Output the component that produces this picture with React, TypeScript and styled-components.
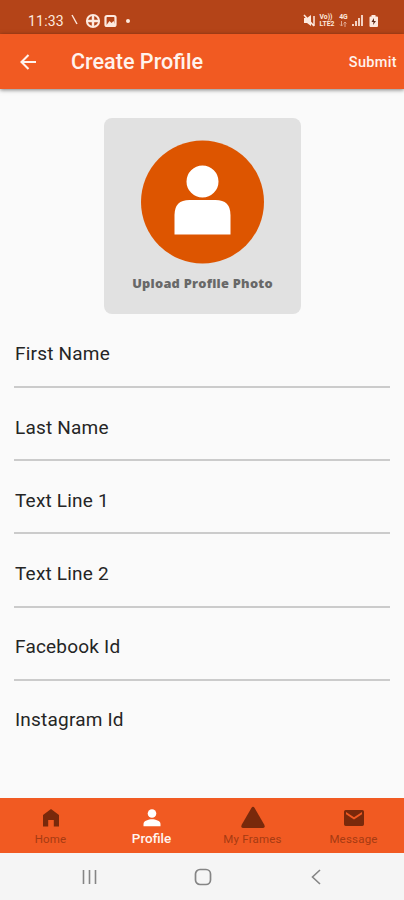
import React from "react";
import styled, { createGlobalStyle } from "styled-components";

const GlobalStyle = createGlobalStyle`
  * { box-sizing: border-box; }
  body { margin: 0; background: #fafafa; font-family: Roboto, "Liberation Sans", sans-serif; }
`;

const Screen = styled.div`
  width: 404px;
  height: 900px;
  display: flex;
  flex-direction: column;
  overflow: hidden;
  background: #fafafa;
`;

const StatusBar = styled.header`
  height: 34px;
  flex: none;
  display: flex;
  align-items: center;
  padding: 7px 24px 0 28px;
  background: #b44418;
  color: #fde9df;
`;

const Clock = styled.time`
  width: 43px;
  font-size: 14px;
  line-height: 16px;
  letter-spacing: 0.2px;
`;

const StatusIcons = styled.div`
  display: flex;
  align-items: center;
  svg { display: block; }
`;

const StatusRight = styled(StatusIcons)`
  margin-left: auto;
  gap: 3px;
`;

const NetworkLabel = styled.div<{ $width: number }>`
  width: ${(p) => p.$width}px;
  display: grid;
  grid-template-rows: 7px 7px;
  justify-content: center;
  font-size: 6.8px;
  line-height: 7px;
  font-weight: 700;
  letter-spacing: 0;
  white-space: nowrap;
`;

const DataArrows = styled.svg`
  justify-self: center;
  opacity: 0.6;
`;

const AppBar = styled.div`
  height: 55px;
  flex: none;
  display: flex;
  align-items: center;
  padding: 0 7px 0 20px;
  background: #f15a22;
  color: #fff3ed;
  box-shadow: 0 1px 4px rgba(0, 0, 0, 0.5);
  z-index: 1;
`;

const IconButton = styled.button`
  border: 0;
  padding: 0;
  background: none;
  color: inherit;
  display: flex;
`;

const Title = styled.h1`
  margin: 0 0 0 35px;
  font-size: 21.6px;
  line-height: 28px;
  font-weight: 500;
  letter-spacing: 0;
`;

const SubmitButton = styled.button`
  margin-left: auto;
  padding: 2px 0 0;
  border: 0;
  background: none;
  color: inherit;
  font: 500 14.5px/20px Roboto, sans-serif;
  letter-spacing: 0.35px;
`;

const Content = styled.main`
  flex: 1;
  min-height: 0;
  padding: 29px 14px 0;
`;

const UploadCard = styled.section`
  width: 197px;
  height: 196px;
  margin: 0 auto 0 90px;
  padding-top: 22px;
  border-radius: 8px;
  background: #e1e1e1;
  display: flex;
  flex-direction: column;
  align-items: center;
`;

const UploadCaption = styled.div`
  margin-top: 10px;
  color: #686868;
  font: 800 12.8px/18px "Open Sans", sans-serif;
  letter-spacing: 0.25px;
  white-space: nowrap;
`;

const Fields = styled.div`
  margin-top: 1px;
`;

const Field = styled.label`
  display: block;
  height: 73.15px;
  padding: 27.4px 1px 0;
  border-bottom: 2px solid #cbcbcb;
  color: #252525;
  font-size: 19px;
  line-height: 24px;
  letter-spacing: 0.2px;
  &:last-child { border-bottom: 0; }
`;

const TabBar = styled.nav`
  height: 55px;
  flex: none;
  display: grid;
  grid-template-columns: repeat(4, 1fr);
  background: #f15a22;
`;

const Tab = styled.div<{ $active?: boolean }>`
  display: flex;
  flex-direction: column;
  align-items: center;
  padding-top: 8px;
  color: ${(p) => (p.$active ? "#fff" : "#79290b")};
`;

const TabLabel = styled.span<{ $active?: boolean }>`
  margin-top: ${(p) => (p.$active ? 0 : 1)}px;
  color: ${(p) => (p.$active ? "#fff5f0" : "#a63b12")};
  font-size: ${(p) => (p.$active ? 13.5 : 11.5)}px;
  font-weight: ${(p) => (p.$active ? 500 : 400)};
  line-height: 16px;
  letter-spacing: ${(p) => (p.$active ? 0 : 0.2)}px;
`;

const SystemBar = styled.footer`
  height: 47px;
  flex: none;
  display: flex;
  justify-content: space-between;
  align-items: center;
  padding: 0 78px 0 80px;
  background: #f5f5f5;
  color: #858585;
`;

const fields = ["First Name", "Last Name", "Text Line 1", "Text Line 2", "Facebook Id", "Instagram Id"];

const tabs = [
  { label: "Home", icon: <path d="M4 20.500V9L12 3l8 6v11.500h-5.200V14H9.200v6.500z" /> },
  { label: "Profile", active: true, icon: <><circle cx="12" cy="7.500" r="4.300" /><path d="M3.500 20.300V18c0-3.200 5.200-4.700 8.500-4.700s8.500 1.500 8.500 4.700v2.300z" /></> },
  { label: "My Frames", icon: <path d="M10.400 2Q12 -.5 13.600 2L23.300 18.800q1.300 3.200-1.800 3.200h-19Q-.6 22 .7 18.800z" /> },
  { label: "Message", icon: <path fillRule="evenodd" d="M3.700 4h16.600q1.700 0 1.700 1.700v12.600q0 1.700-1.700 1.700H3.700Q2 20 2 18.300V5.700Q2 4 3.700 4zM4 6v2.300l8 5.300 8-5.300V6l-8 5.200z" /> },
];

export default function App() {
  return (
    <>
      <GlobalStyle />
      <Screen>
        <StatusBar>
          <Clock>11:33</Clock>
          <StatusIcons>
            <svg width="63" height="16" viewBox="0 0 63 16" fill="none" stroke="#fde9df">
              <path d="M1 2l5 9" strokeWidth="1.400" />
              <circle cx="22" cy="8" r="6.100" strokeWidth="2" />
              <path d="M22 2v12M16 8h12" strokeWidth="2.400" />
              <rect x="34.500" y="3" width="10" height="10" rx="1.500" strokeWidth="2.200" />
              <path d="M35.500 12l3-4 2 2 2-2 2 4z" fill="#fde9df" stroke="none" />
              <circle cx="57" cy="8" r="2" fill="#fde9df" stroke="none" />
            </svg>
          </StatusIcons>
          <StatusRight>
            <svg width="13" height="14" viewBox="0 0 13 14" fill="#fde9df" stroke="#fde9df">
              <path d="M1 4h3l4-3v11L4 9H1z" stroke="none" />
              <path d="M1 1l10 11M11 2v10" fill="none" strokeWidth="1.500" />
            </svg>
            <NetworkLabel $width={16}><span>Vo))</span><span>LTE2</span></NetworkLabel>
            <NetworkLabel $width={11}>
              <span>4G</span>
              <DataArrows width="8" height="6" viewBox="0 0 8 6" fill="none" stroke="#fde9df">
                <path d="M2.500 0v5M1 3.500L2.500 5 4 3.500M6 6V1M4.500 2.500L6 1l1.500 1.500" />
              </DataArrows>
            </NetworkLabel>
            <svg width="12" height="13" viewBox="0 0 12 13" fill="#fde9df">
              <path d="M0 10h2v2H0zM3 7h2v5H3zM6 4h2v8H6zM9 1h2v11H9z" opacity=".85" />
            </svg>
            <svg width="13" height="14" viewBox="0 0 13 14">
              <path d="M4.500 1h4v1.500H10q1 0 1 1V12q0 1-1 1H3.500q-1 0-1-1V3.500q0-1 1-1h1z" fill="#fde9df" />
              <path d="M7 4L4.500 8h2L6 11l3-4H7z" fill="#5d2917" />
            </svg>
          </StatusRight>
        </StatusBar>
        <AppBar>
          <IconButton aria-label="Back">
            <svg width="16" height="16" viewBox="0 0 16 16" fill="none" stroke="currentColor" strokeWidth="2.100">
              <path d="M16 8H2M8.500 1L1.500 8l7 7" />
            </svg>
          </IconButton>
          <Title>Create Profile</Title>
          <SubmitButton>Submit</SubmitButton>
        </AppBar>
        <Content>
          <UploadCard>
            <svg width="124" height="124" viewBox="0 0 124 124">
              <circle cx="61.500" cy="62" r="61.500" fill="#dd5500" />
              <path d="M33.500 94.500V75q0-15 15-15h26q15 0 15 15v19.500z" fill="#fff" />
              <circle cx="61.500" cy="41.500" r="17" fill="#fff" stroke="#dd5500" strokeWidth="2" />
            </svg>
            <UploadCaption>Upload Profile Photo</UploadCaption>
          </UploadCard>
          <Fields>{fields.map((name) => <Field key={name}>{name}</Field>)}</Fields>
        </Content>
        <TabBar>
          {tabs.map((tab) => (
            <Tab key={tab.label} $active={tab.active}>
              <svg width="24" height="24" viewBox="0 0 24 24" fill="currentColor">{tab.icon}</svg>
              <TabLabel $active={tab.active}>{tab.label}</TabLabel>
            </Tab>
          ))}
        </TabBar>
        <SystemBar>
          <svg width="20" height="18" viewBox="0 0 20 18" fill="none" stroke="currentColor" strokeWidth="1.600">
            <path d="M3.500 2v14M9.500 2v14M15.500 2v14" />
          </svg>
          <svg width="20" height="20" viewBox="0 0 20 20" fill="none" stroke="currentColor" strokeWidth="1.700">
            <rect x="2.500" y="2.500" width="15" height="15" rx="4.500" />
          </svg>
          <svg width="20" height="18" viewBox="0 0 20 18" fill="none" stroke="currentColor" strokeWidth="1.600">
            <path d="M14 2L6.500 9l7.500 7" />
          </svg>
        </SystemBar>
      </Screen>
    </>
  );
}
